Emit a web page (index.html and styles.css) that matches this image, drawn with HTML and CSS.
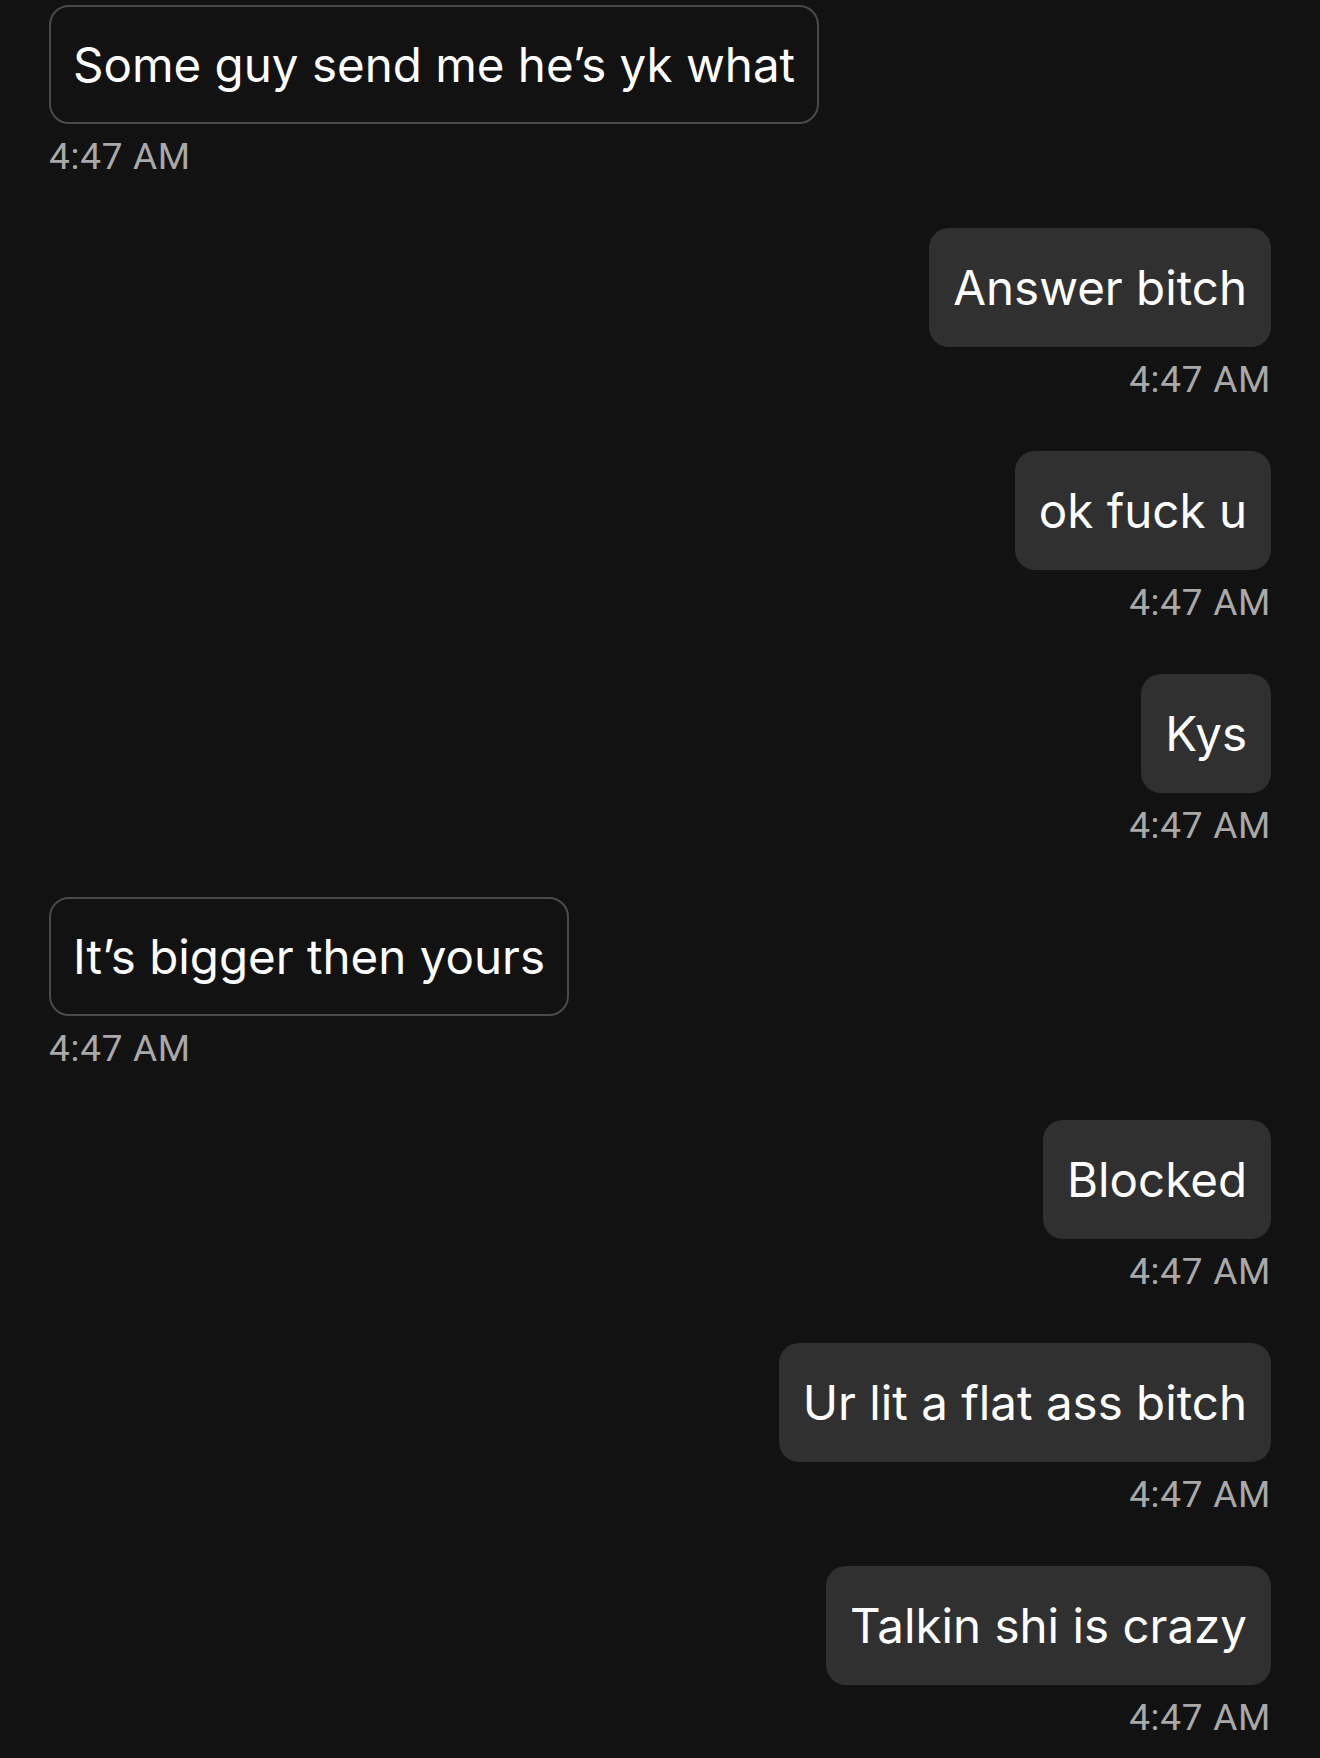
FILE: index.html
```html
<!DOCTYPE html>
<html lang="en">
<head>
  <meta charset="UTF-8">
  <meta name="viewport" content="width=device-width, initial-scale=1">
  <title>Chat</title>
  <link rel="stylesheet" href="styles.css">
</head>
<body>

  <div class="thread">
    <div class="message received">
      <div class="bubble">Some guy send me he’s yk what</div>
      <div class="time">4:47 AM</div>
    </div>
    <div class="message sent">
      <div class="bubble">Answer bitch</div>
      <div class="time">4:47 AM</div>
    </div>
    <div class="message sent">
      <div class="bubble">ok fuck u</div>
      <div class="time">4:47 AM</div>
    </div>
    <div class="message sent">
      <div class="bubble">Kys</div>
      <div class="time">4:47 AM</div>
    </div>
    <div class="message received">
      <div class="bubble">It’s bigger then yours</div>
      <div class="time">4:47 AM</div>
    </div>
    <div class="message sent">
      <div class="bubble">Blocked</div>
      <div class="time">4:47 AM</div>
    </div>
    <div class="message sent">
      <div class="bubble">Ur lit a flat ass bitch</div>
      <div class="time">4:47 AM</div>
    </div>
    <div class="message sent">
      <div class="bubble">Talkin shi is crazy</div>
      <div class="time">4:47 AM</div>
    </div>
  </div>

</body>
</html>
```

FILE: styles.css
```css
html, body {
  margin: 0; padding: 0;
  background: #121212;
  color: #fff;
  font-family: 'Inter', 'Noto Sans', sans-serif;
  height: 100%; overflow: hidden;
}
.thread {
  display: flex;
  flex-direction: column;
  padding: 5px 49px 0;
}
.message {
  display: flex;
  flex-direction: column;
  margin-bottom: 49px;
}
.message.received { align-items: flex-start; }
.message.sent { align-items: flex-end; }
.bubble {
  box-sizing: border-box;
  height: 119px;
  display: flex;
  align-items: center;
  padding: 0 24px;
  font-size: 47.5px;
  border-radius: 20px;
  white-space: nowrap;
}
.received .bubble {
  border: 2.5px solid #4a4a4a;
  padding: 0 22px;
}
.sent .bubble {
  background: #303030;
}
.time {
  margin-top: 11px;
  font-family: 'Roboto', Arial, sans-serif;
  font-size: 37px;
  letter-spacing: 0.7px;
  line-height: 44px;
  color: #a9a9a9;
}
```
